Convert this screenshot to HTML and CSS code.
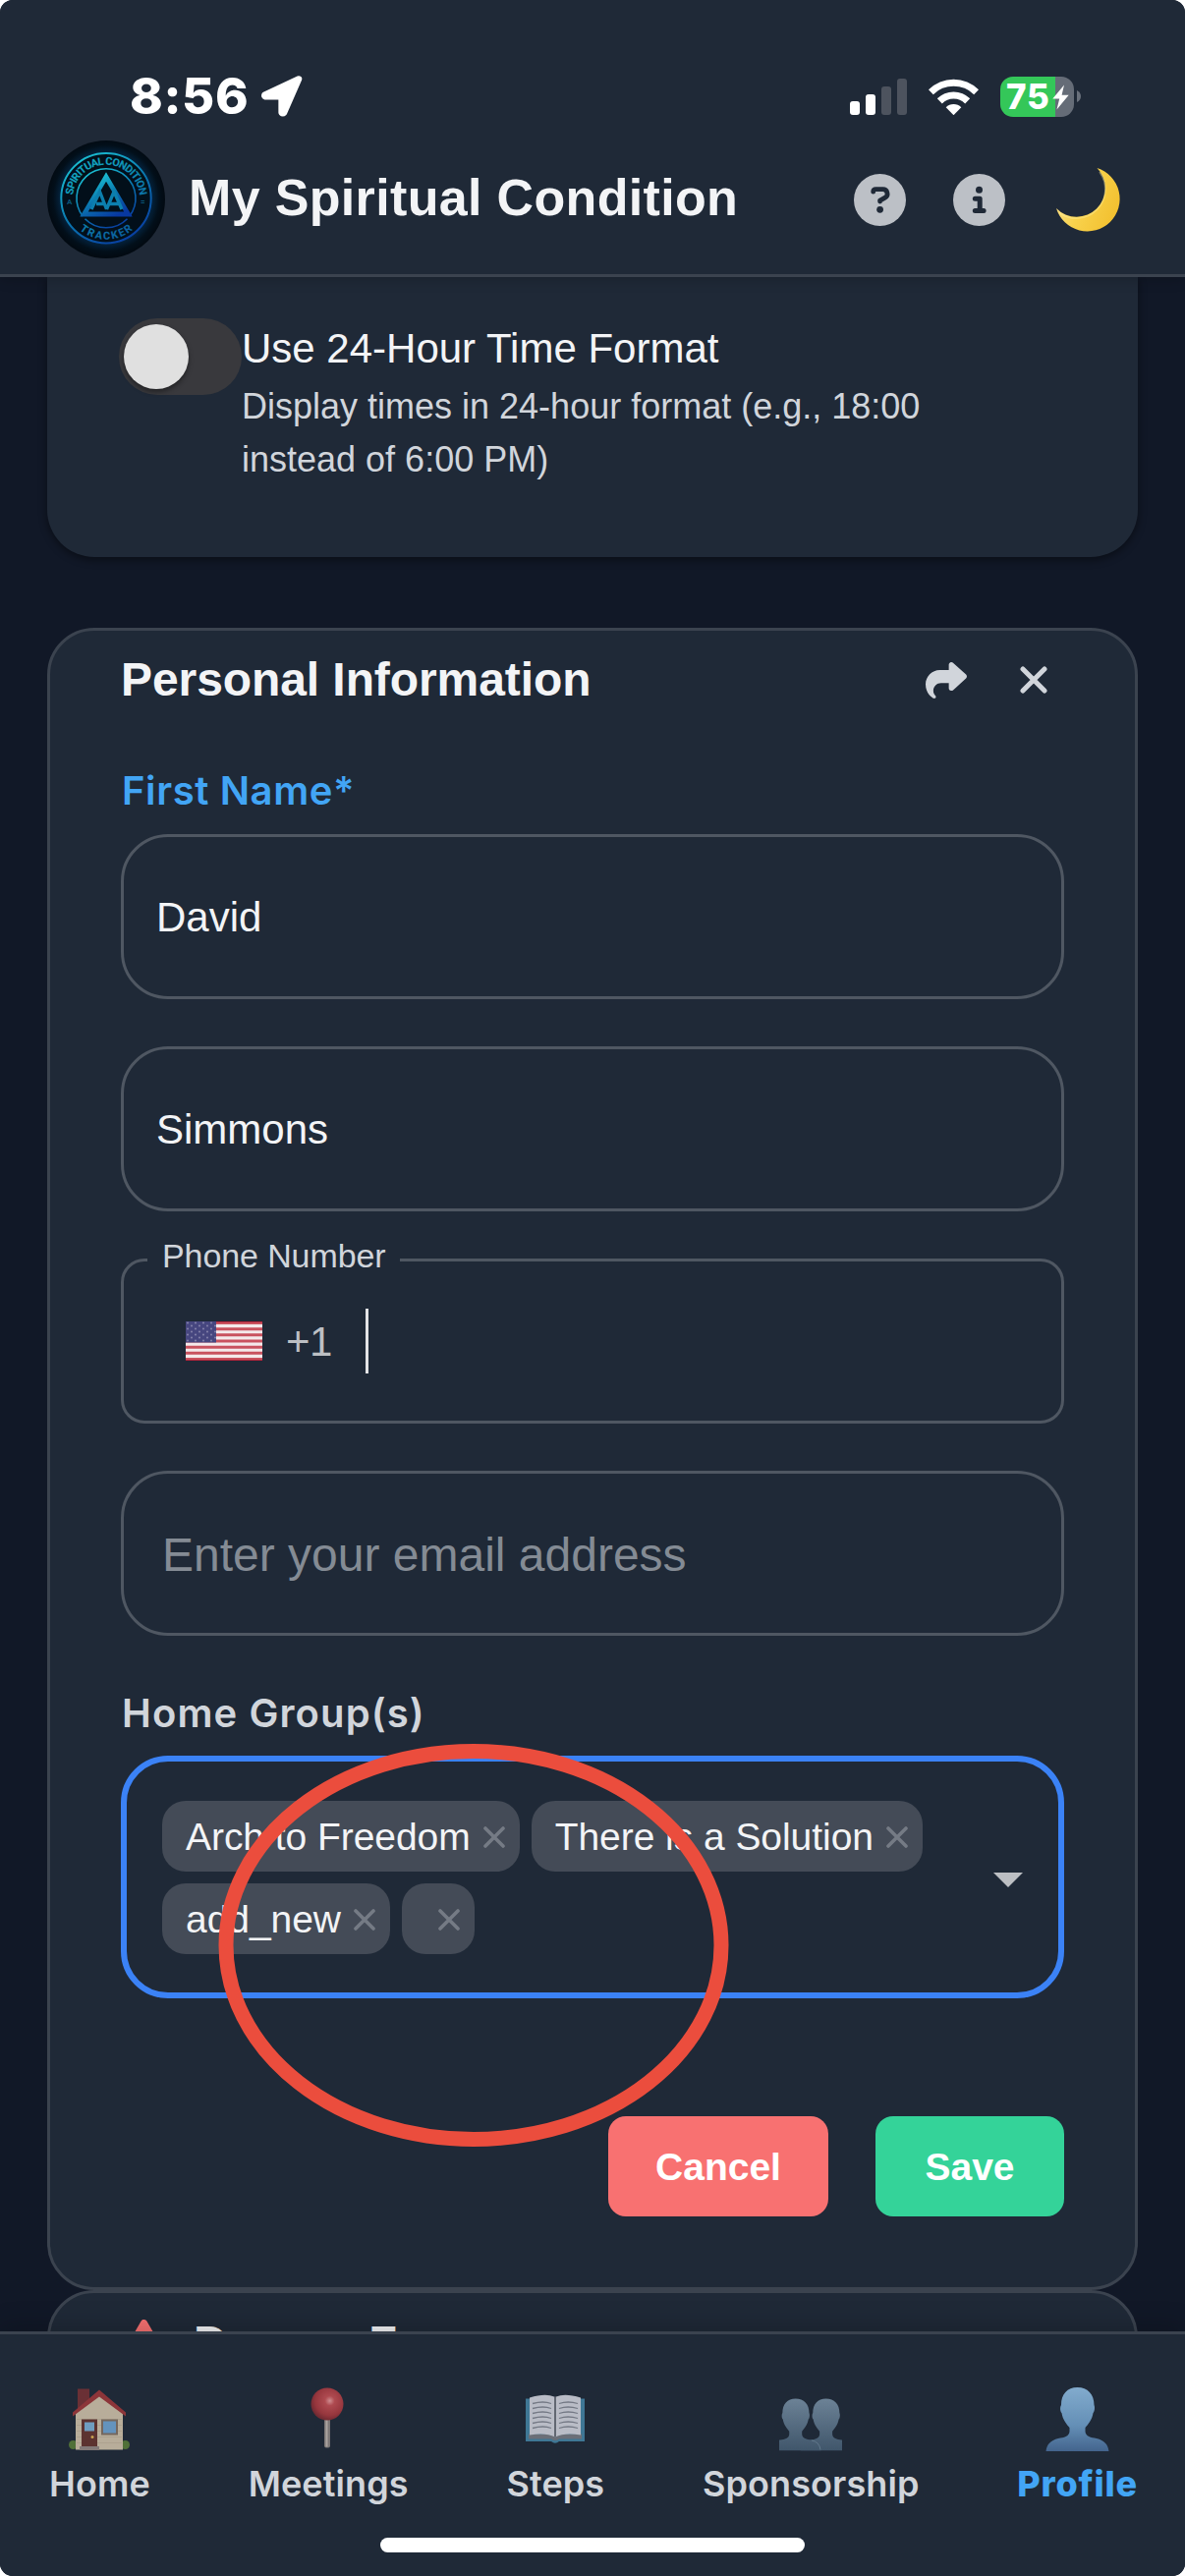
FILE: index.html
```html
<!DOCTYPE html>
<html lang="en">
<head>
<meta charset="utf-8">
<title>My Spiritual Condition</title>
<link rel="stylesheet" href="styles.css">
</head>
<body>
<div class="screen">
  <header class="header">
    <div class="status">
      <div class="status-left">
        <span class="clock">8:56</span>
        <svg class="location" width="42" height="42" viewBox="0 0 42 42"><path d="M38 3.4 3.4 19.8Q3 21 4 21.2H20.6V37.6Q21.8 38.8 23 37.6Z" fill="#fff" stroke="#fff" stroke-width="6.5" stroke-linejoin="round"/></svg>
      </div>
      <div class="status-right">
        <svg class="signal" width="58" height="37" viewBox="0 0 58 37">
          <rect x="0" y="23" width="10" height="14" rx="3" fill="#fff"/><rect x="16" y="16" width="10" height="21" rx="3" fill="#fff"/>
          <rect x="32" y="8" width="10" height="29" rx="3" fill="#4d535e"/><rect x="48" y="0" width="10" height="37" rx="3" fill="#4d535e"/>
        </svg>
        <svg class="wifi" width="51" height="37" viewBox="0 0 51 37">
          <path d="M0 11.3A36 36 0 0 1 51 11.3L46.2 16.2A29.3 29.3 0 0 0 4.8 16.2Z" fill="#fff"/>
          <path d="M8.8 20.3A23.6 23.6 0 0 1 42.2 20.3L37.2 25.4A16.6 16.6 0 0 0 13.8 25.4Z" fill="#fff"/>
          <path d="M17.7 29.3A11 11 0 0 1 33.3 29.3L25.5 37.2Z" fill="#fff"/>
        </svg>
        <div class="battery"><span class="battery-level">75</span>
          <svg class="bolt" width="17" height="26" viewBox="0 0 17 26"><path d="M12 .5.3 14.6H7.2L4.5 25.5 16.7 10.8H9.6Z" fill="#fff"/></svg>
        </div>
        <svg class="battery-nub" width="4" height="12" viewBox="0 0 4 12"><path d="M0 0Q4 2 4 6T0 12Z" fill="#69707b"/></svg>
      </div>
    </div>
    <div class="appbar">
      <svg class="logo" width="120" height="120" viewBox="0 0 120 120">
        <defs>
          <linearGradient id="neon" x1="0.2" y1="0" x2="0.8" y2="1"><stop offset="0" stop-color="#1cc4d4"/><stop offset=".5" stop-color="#0a78b0"/><stop offset="1" stop-color="#0838a0"/></linearGradient>
          <linearGradient id="neonText" gradientUnits="userSpaceOnUse" x1="20" y1="20" x2="80" y2="105"><stop offset="0" stop-color="#14b0c4"/><stop offset=".5" stop-color="#0d86b0"/><stop offset="1" stop-color="#0a5698"/></linearGradient>
          <radialGradient id="glow" cx=".5" cy=".49"><stop offset=".6" stop-color="#02101c"/><stop offset=".76" stop-color="#042440"/><stop offset=".9" stop-color="#020f1a"/><stop offset="1" stop-color="#020a12"/></radialGradient>
          <path id="arcTop" d="M26 58.7A34 34 0 0 1 94 58.7"/>
          <path id="arcBottom" d="M18 58.7A42 42 0 0 0 102 58.7"/>
        </defs>
        <circle cx="60" cy="60" r="60" fill="url(#glow)"/>
        <circle cx="60" cy="58.7" r="45.7" fill="#020f1a" stroke="url(#neon)" stroke-width="2"/>
        <path d="M36.2 77A30 30 0 1 1 83.8 77M38.5 79.7A30 30 0 0 0 81.5 79.7" fill="none" stroke="url(#neon)" stroke-width="1.6"/>
        <text class="logo-text" fill="url(#neonText)"><textPath href="#arcTop" startOffset="3" textLength="101">SPIRITUAL CONDITION</textPath></text>
        <text class="logo-text" fill="url(#neonText)"><textPath href="#arcBottom" startOffset="36.5" textLength="59">TRACKER</textPath></text>
        <text class="logo-small" x="20" y="65">A</text><text class="logo-small" x="95" y="65">=</text>
        <path d="M60 37 37.5 75H82.5Z" fill="none" stroke="url(#neon)" stroke-width="4.8"/>
        <path d="M45 70 53.500 52 60.5 70M50 64.500H58M60.500 70 68 52 76 70M64 64.500H73" fill="none" stroke="#0c7fae" stroke-width="3.400"/>
      </svg>
      <h1 class="app-title">My Spiritual Condition</h1>
      <div class="actions">
        <svg width="53" height="53" viewBox="0 0 53 53"><circle cx="26.500" cy="26.500" r="26.500" fill="#bcc0c6"/><path d="M19.700 18.200v-.1a2.600 2.600 0 0 1 2.600-2.400h7.200a4.500 4.500 0 0 1 2.300 8.400l-5.200 3v1" fill="none" stroke="#1f2937" stroke-width="4.800" stroke-linecap="round" stroke-linejoin="round"/><circle cx="26.600" cy="36.300" r="3.400" fill="#1f2937"/></svg>
        <svg width="53" height="53" viewBox="0 0 53 53"><circle cx="26.500" cy="26.500" r="26.500" fill="#bcc0c6"/><circle cx="26.500" cy="16.300" r="3.500" fill="#1f2937"/><path d="M22.300 25.200h4.900v12M22.300 37.400h8.800" fill="none" stroke="#1f2937" stroke-width="5" stroke-linecap="round" stroke-linejoin="round"/></svg>
        <svg width="65" height="65" viewBox="0 0 65 65"><defs><linearGradient id="moon" x1="0" y1=".4" x2="1" y2=".8"><stop offset="0" stop-color="#fbe08a"/><stop offset=".4" stop-color="#f8d24c"/><stop offset="1" stop-color="#f2be2c"/></linearGradient></defs><path d="M41.500 0A33 33 0 1 1 0 41 28.900 28.900 0 1 0 41.500 0Z" fill="url(#moon)"/><path d="M44 4A29.500 29.500 0 0 1 3 45.500" fill="none" stroke="#fff0a0" stroke-width="1.600" opacity=".4"/></svg>
      </div>
    </div>
  </header>

  <main class="content">
    <section class="card time-card">
      <span class="toggle"><span class="thumb"></span></span>
      <div class="toggle-copy">
        <div class="toggle-title">Use 24-Hour Time Format</div>
        <div class="toggle-desc">Display times in 24-hour format (e.g., 18:00<br>instead of 6:00 PM)</div>
      </div>
    </section>

    <section class="card outlined info-card">
      <div class="card-head">
        <h2>Personal Information</h2>
        <div class="card-tools">
          <svg width="42" height="37" viewBox="0 32 512 448" preserveAspectRatio="none"><path fill="#d1d5db" d="M307 34.800c-11.500 5.100-19 16.600-19 29.200v64H176C78.800 128 0 206.800 0 304C0 417.300 81.500 467.900 100.200 478.100c2.500 1.400 5.300 1.900 8.100 1.900c10.900 0 19.700-8.900 19.700-19.700c0-7.500-4.300-14.400-9.800-19.500C108.800 431.900 96 414.400 96 384c0-53 43-96 96-96h96v64c0 12.600 7.400 24.100 19 29.200s25 3 34.400-5.400l160-144c6.700-6.100 10.600-14.700 10.600-23.800s-3.800-17.700-10.600-23.800l-160-144c-9.400-8.500-22.900-10.600-34.400-5.400z"/></svg>
          <svg width="28" height="28" viewBox="0 0 28 28"><path d="M3 3 25 25M25 3 3 25" stroke="#d1d5db" stroke-width="5" stroke-linecap="round"/></svg>
        </div>
      </div>
      <label class="label label-first">First Name*</label>
      <div class="field">David</div>
      <div class="field">Simmons</div>
      <div class="field phone">
        <span class="notch">Phone Number</span>
        <svg class="flag" width="78" height="40" viewBox="0 0 78 40" preserveAspectRatio="none">
          <defs><pattern id="stars" width="8" height="6" patternUnits="userSpaceOnUse"><circle cx="2" cy="1.500" r="1" fill="#8583ac"/><circle cx="6" cy="4.500" r="1" fill="#8583ac"/></pattern></defs>
          <rect width="78" height="40" fill="#c9525f"/>
          <path d="M0 4.600h78M0 10.800h78M0 16.900h78M0 23.100h78M0 29.200h78M0 35.400h78" stroke="#f4e9eb" stroke-width="3.100"/>
          <path d="M0 .5h78M0 39.500h78" stroke="#b0243a"/>
          <rect width="31" height="21.500" fill="#46467f"/><rect width="31" height="21.500" fill="url(#stars)"/>
        </svg>
        <span class="dial">+1</span>
        <span class="caret"></span>
      </div>
      <div class="field email">Enter your email address</div>
      <label class="label label-group">Home Group(s)</label>
      <div class="select">
        <div class="chips">
          <span class="chip"><span>Arch to Freedom</span><svg class="x" viewBox="0 0 22 22"><path d="M2 2 20 20M20 2 2 20"/></svg></span>
          <span class="chip"><span>There is a Solution</span><svg class="x" viewBox="0 0 22 22"><path d="M2 2 20 20M20 2 2 20"/></svg></span>
          <span class="chip"><span>add_new</span><svg class="x" viewBox="0 0 22 22"><path d="M2 2 20 20M20 2 2 20"/></svg></span>
          <span class="chip"><span></span><svg class="x" viewBox="0 0 22 22"><path d="M2 2 20 20M20 2 2 20"/></svg></span>
        </div>
        <svg class="arrow" width="30" height="15" viewBox="0 0 30 15"><path d="M0 0H30L15 15Z" fill="#bcbfc3"/></svg>
        <svg class="annotation" width="520" height="412" viewBox="0 0 520 412"><ellipse cx="260" cy="206" rx="252" ry="197.500" fill="none" stroke="#eb4d3d" stroke-width="15"/></svg>
      </div>
      <div class="buttons">
        <button class="btn cancel">Cancel</button>
        <button class="btn save">Save</button>
      </div>
    </section>

    <section class="card outlined danger-card">
      <svg width="53" height="47" viewBox="0 0 53 47"><path d="M26.500 3.500 49.500 43.500H3.500Z" fill="#f87171" stroke="#f87171" stroke-width="7" stroke-linejoin="round"/></svg>
      <h2>Danger Zone</h2>
    </section>
  </main>

  <nav class="nav">
    <div class="tabs">
      <div class="tab">
        <svg width="62" height="64" viewBox="0 0 62 64">
          <circle cx="4.500" cy="58" r="4.500" fill="#4f7038"/><circle cx="57.500" cy="58" r="4.500" fill="#4f7038"/>
          <path d="M9 1H21V14L9 26Z" fill="#6a3035"/>
          <path d="M7 26 31 6 55 26V63H7Z" fill="#b8ad9a"/>
          <path d="M8 32H54M8 38H54M8 44H54M8 50H54M8 56H54" stroke="#ada28f"/>
          <path d="M31 2 58 25V29L31 9 4 29V25Z" fill="#8c3539"/>
          <rect x="13" y="32" width="16" height="28" fill="#5c3330"/><rect x="16" y="35" width="10" height="9" fill="#6f9dc0"/><circle cx="24" cy="50" r="1.500" fill="#c8a250"/>
          <rect x="33" y="32" width="17" height="16" fill="#75675d"/><rect x="35" y="34" width="13" height="12" fill="#6493bd"/>
          <rect x="11" y="59.500" width="20" height="4" fill="#837a78"/>
        </svg>
        <span>Home</span>
      </div>
      <div class="tab">
        <svg width="36" height="64" viewBox="0 0 36 64"><defs><radialGradient id="pin" cx=".58" cy=".4" r=".6"><stop offset="0" stop-color="#cf8d90"/><stop offset=".25" stop-color="#ae4a50"/><stop offset=".75" stop-color="#96363d"/><stop offset="1" stop-color="#722a32"/></radialGradient></defs><rect x="14" y="28" width="6" height="33" rx="2" fill="#7b7676"/><rect x="15.500" y="30" width="2" height="30" fill="#aaa3a0"/><circle cx="17" cy="16.500" r="16.500" fill="url(#pin)"/></svg>
        <span>Meetings</span>
      </div>
      <div class="tab">
        <svg width="60" height="64" viewBox="0 -7 60 64"><path d="M0 4H60V47.500H34Q30 51 26 47.500H0Z" fill="#3f7795"/><path d="M3 40H57V45H34Q30 48 26 45H3Z" fill="#6b6f78"/><path d="M4 3Q20-2 29 2Q30 3 31 2Q40-2 56 3V41Q40 38 30 43Q20 38 4 41Z" fill="#b9bcc6"/><path d="M7 9Q18 6 26 9M7 14Q18 11 26 14M7 19Q18 16 26 19M7 24Q18 21 26 24M7 29Q18 26 26 29M7 34Q18 31 26 34M34 9Q43 6 53 9M34 14Q43 11 53 14M34 19Q43 16 53 19M34 24Q43 21 53 24M34 29Q43 26 53 29M34 34Q43 31 53 34" fill="none" stroke="#747985" stroke-width="1.300"/><path d="M30 2V43" stroke="#626772" stroke-width="2"/></svg>
        <span>Steps</span>
      </div>
      <div class="tab">
        <svg width="64" height="64" viewBox="0 -11 64 64"><defs><linearGradient id="grey" x1="0" y1="0" x2="0" y2="1"><stop offset="0" stop-color="#6c8296"/><stop offset="1" stop-color="#40566b"/></linearGradient><path id="bust" d="M32.500 0C43 0 49.500 7 49.500 18C50.500 20 50 25 48.500 26C47.500 33 43 38 40.500 41V45C41 50 46 51 52 52C60 54 63.500 58 64.500 65H.5C1.500 58 5 54 13 52C19 51 24 50 24.500 45V41C22 38 17.500 33 16.500 26C15 25 14.500 20 16 18C16 7 22 0 32.500 0Z"/></defs><g fill="url(#grey)"><use href="#bust" transform="translate(21.300 0) scale(.81)"/><use href="#bust" transform="translate(-9.600 0) scale(.81)"/></g><path d="M33 42.500Q41 44 42 52" fill="none" stroke="#61788b"/></svg>
        <span>Sponsorship</span>
      </div>
      <div class="tab active">
        <svg width="65" height="65" viewBox="0 0 65 65"><defs><linearGradient id="blue" x1="0" y1="0" x2="0" y2="1"><stop offset="0" stop-color="#82abcd"/><stop offset=".6" stop-color="#648fb6"/><stop offset="1" stop-color="#43648d"/></linearGradient></defs><use href="#bust" fill="url(#blue)"/></svg>
        <span>Profile</span>
      </div>
    </div>
    <div class="home-indicator"></div>
  </nav>
</div>
</body>
</html>
```
FILE: styles.css
```css
* { box-sizing: border-box; }
html, body { margin: 0; background: #fff; }
body { width: 1206px; height: 2622px; overflow: hidden; font-family: "Liberation Sans", Arial, sans-serif; color: #f3f4f6; }
svg { display: block; flex: none; }
h1, h2 { margin: 0; }

.screen { width: 1206px; height: 2622px; display: flex; flex-direction: column; overflow: hidden; border-radius: 13px; background: #111827; }

/* Header */
.header { flex: none; height: 282px; background: #1f2937; border-bottom: 3px solid #3b434f; position: relative; z-index: 2; box-shadow: 0 3px 12px rgba(0, 0, 0, .18); }
.status { height: 143px; padding: 77px 106px 0 132px; display: flex; justify-content: space-between; align-items: flex-start; }
.status-left, .status-right { display: flex; align-items: center; height: 42px; }
.clock { width: 121px; font: 800 51px/42px Inter, sans-serif; letter-spacing: .6px; white-space: nowrap; }
.clock, .battery-level { color: #fff; }
.location { margin-left: 13px; }
.signal { margin-right: 22px; }
.wifi { margin-right: 22px; }
.battery { position: relative; width: 75px; height: 41px; border-radius: 13px; padding-left: 6px; background: linear-gradient(90deg, #34c759 56px, #656c77 56px); }
.battery-level { font: 800 35px/40px Inter, sans-serif; letter-spacing: .8px; }
.bolt { position: absolute; left: 53px; top: 8px; }
.battery-nub { margin-left: 3px; }
.appbar { height: 120px; padding: 0 66px 0 48px; display: flex; align-items: center; }
.logo-text { font: 800 11px Roboto, sans-serif; }
.logo-small { font: 700 8px Roboto, sans-serif; fill: #0a5578; }
.app-title { flex: 1; margin-left: 24px; padding-bottom: 4px; font-size: 52px; line-height: 60px; font-weight: 700; letter-spacing: .34px; white-space: nowrap; }
.actions { display: flex; align-items: center; }
.actions svg:nth-child(2) { margin: 0 52px 0 48px; }

/* Cards */
.content { flex: 1; min-height: 0; overflow: hidden; padding: 0 48px; }
.card { background: #1f2937; border-radius: 48px; }
.outlined { border: 3px solid #3b434f; }
.time-card { height: 285px; border-radius: 0 0 48px 48px; padding: 42px 72px 0 73px; display: flex; align-items: flex-start; box-shadow: 0 3px 9px rgba(0, 0, 0, .45); }
.toggle { flex: none; width: 125px; height: 78px; border-radius: 39px; background: #39393d; padding: 6px 5px; }
.thumb { display: block; width: 66px; height: 66px; border-radius: 50%; background: #e0e0e0; box-shadow: 0 3px 5px rgba(0, 0, 0, .4); }
.toggle-title { font-size: 42px; line-height: 61px; padding-bottom: 2px; }
.toggle-desc { font-size: 36px; line-height: 54px; color: #d1d5db; white-space: nowrap; }

.info-card { margin-top: 72px; height: 1692px; padding: 0 72px; display: flex; flex-direction: column; }
.card-head { height: 100px; display: flex; justify-content: space-between; align-items: center; }
.card-head h2, .danger-card h2 { font-size: 48px; line-height: 58px; font-weight: 700; letter-spacing: -.08px; }
.card-tools { display: flex; align-items: center; gap: 54px; padding-right: 17px; }
.label { font: 600 40px/60px Inter, sans-serif; padding-left: 1px; white-space: nowrap; }
.label-first { color: #42a5f5; letter-spacing: .6px; margin: 33px 0 14px; }
.label-group { color: #d1d5db; letter-spacing: 1.1px; margin: 1px 0 13px; }
.field { flex: none; position: relative; height: 168px; margin-bottom: 48px; border: 3px solid #4f5762; border-radius: 48px; padding: 0 33px; display: flex; align-items: center; font-size: 42px; line-height: 63px; }
.phone { border-radius: 24px; padding-left: 63px; }
.notch { position: absolute; left: 24px; top: -31px; width: 257px; height: 50px; padding-left: 15px; background: #1f2937; font-size: 34px; line-height: 50px; letter-spacing: -.1px; color: #d1d5db; white-space: nowrap; }
.dial { margin-left: 24px; width: 54px; color: #bcbfc3; letter-spacing: -.5px; }
.caret { width: 3px; height: 66px; margin-left: 27px; background: #e3e4e6; }
.email { padding: 2px 0 0 39px; font-size: 48px; color: #848b94; }

.select { flex: none; position: relative; height: 247px; border: 6px solid #3b82f6; border-radius: 48px; padding: 40px 36px 39px; display: flex; align-items: center; justify-content: space-between; }
.chips { display: flex; flex-wrap: wrap; gap: 12px; width: 800px; }
.chip { height: 72px; padding: 2px 15px 0 24px; border-radius: 24px; background: #444b57; display: flex; align-items: center; gap: 13px; font-size: 39px; letter-spacing: -.05px; white-space: nowrap; }
.x { width: 22px; height: 22px; stroke: #757b85; stroke-width: 3.6; stroke-linecap: round; }
.arrow { margin-top: 4px; }
.annotation { position: absolute; left: 93px; top: -19px; z-index: 1; pointer-events: none; }

.buttons { margin-top: 120px; display: flex; justify-content: flex-end; gap: 48px; }
.btn { height: 102px; border: 0; border-radius: 18px; padding: 2px 0 0; font: 700 39px "Liberation Sans", Arial, sans-serif; color: #fff; }
.cancel { width: 224px; background: #f87171; }
.save { width: 192px; background: #34d399; }

.danger-card { height: 160px; padding: 22px 72px; display: flex; align-items: flex-start; gap: 24px; }
.danger-card svg { margin-top: 5px; margin-left: -3px; }

/* Bottom navigation */
.nav { flex: none; height: 249px; background: #1f2937; border-top: 3px solid #3b434f; position: relative; z-index: 2; box-shadow: 0 -6px 24px rgba(0, 0, 0, .18); display: flex; flex-direction: column; align-items: center; }
.tabs { width: 100%; height: 207px; padding: 54px 48px 0 50px; display: flex; justify-content: space-between; align-items: flex-start; }
.tab { display: flex; flex-direction: column; align-items: center; color: #d1d5db; }
.tab svg { height: 65px; }
.tab span { margin-top: 8px; font: 600 36px/50px Inter, sans-serif; letter-spacing: .1px; }
.tab.active span { color: #42a5f5; font-weight: 800; letter-spacing: .8px; }
.home-indicator { width: 432px; height: 15px; border-radius: 8px; background: #fff; }
```
